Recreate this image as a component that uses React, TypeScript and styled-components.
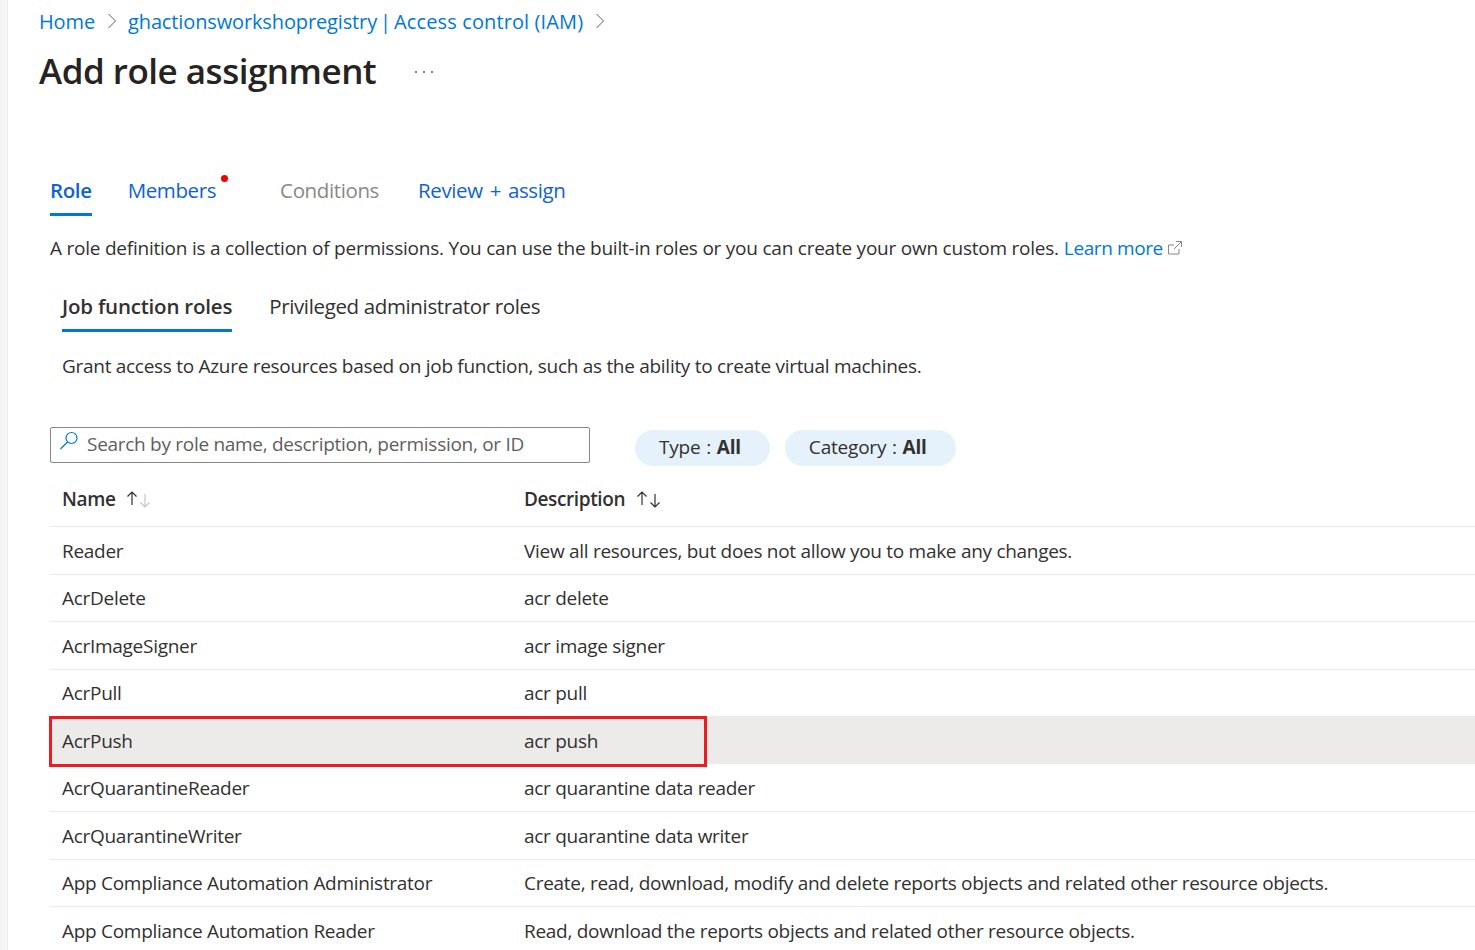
import styled, { createGlobalStyle } from "styled-components";

const GlobalStyle = createGlobalStyle`
  html, body {
    margin: 0;
    padding: 0;
    background: #fff;
    overflow: hidden;
  }
  body {
    font-family: "Open Sans", "Noto Sans", sans-serif;
    color: #323130;
  }
`;

const Page = styled.div`
  display: flex;
  height: 950px;
  overflow: hidden;
  font-size: 19px;
  letter-spacing: -0.29px;
`;

const SideStrip = styled.div`
  width: 7px;
  flex: none;
  background: #f5f5f5;
  border-right: 1px solid #ececec;
`;

const Main = styled.main`
  flex: 1;
  min-width: 0;
`;

const Breadcrumbs = styled.nav`
  display: flex;
  align-items: center;
  height: 22px;
  margin: 10px 0 0 31px;
  gap: 10.500px;
  color: #0078d4;
  font-size: 20px;
  letter-spacing: -0.13px;
`;

const CrumbDivider = styled.span`
  margin: 0 -2px;
`;

const CrumbTail = styled.span`
  letter-spacing: 0.12px;
`;

const Chevron = styled.svg`
  width: 12px;
  height: 18px;
  stroke: #605e5c;
  fill: none;
  stroke-width: 1;
`;

const TitleRow = styled.div`
  display: flex;
  align-items: center;
  margin: 15px 0 0 31px;
  height: 46px;
`;

const Title = styled.h1`
  margin: 0;
  font-size: 35px;
  font-weight: 600;
  letter-spacing: -0.5px;
  color: #252423;
`;

const More = styled.span`
  margin: 3px 0 0 39px;
  width: 18px;
  display: flex;
  justify-content: space-between;
  i {
    width: 2px;
    height: 2px;
    border-radius: 50%;
    background: #605e5c;
  }
`;

const Content = styled.div`
  margin: 79px 0 0 42px;
`;

const WizardTabs = styled.div`
  display: flex;
  height: 44px;
  font-size: 20.500px;
  letter-spacing: -0.38px;
  word-spacing: 2px;
`;

const WizardTab = styled.div<{ $active?: boolean; $muted?: boolean; $gap: number }>`
  position: relative;
  margin-right: ${(p) => p.$gap}px;
  height: 41px;
  line-height: 36px;
  color: ${(p) => (p.$muted ? "#8a8886" : "#0f62d6")};
  font-weight: ${(p) => (p.$active ? 600 : 400)};
  border-bottom: ${(p) => (p.$active ? "3px solid #0078d4" : "3px solid transparent")};
`;

const RedDot = styled.span`
  position: absolute;
  right: -12px;
  top: 3px;
  width: 7px;
  height: 7px;
  border-radius: 50%;
  background: #f00000;
`;

const Intro = styled.p`
  margin: 19px 0 0;
  height: 26px;
  line-height: 26px;
  white-space: nowrap;
  display: flex;
  align-items: center;
  letter-spacing: -0.23px;
`;

const LearnMore = styled.span`
  color: #0078d4;
  margin-left: 5px;
  letter-spacing: -0.4px;
`;

const External = styled.svg`
  width: 16px;
  height: 16px;
  margin-left: 4px;
  fill: none;
  stroke: #8a8886;
  stroke-width: 1;
`;

const RoleTabs = styled.div`
  display: flex;
  margin: 31px 0 0 12px;
  gap: 37px;
  font-size: 20.500px;
  letter-spacing: -0.32px;
`;

const RoleTab = styled.div<{ $active?: boolean }>`
  height: 37px;
  line-height: 28px;
  font-weight: ${(p) => (p.$active ? 600 : 400)};
  letter-spacing: ${(p) => (p.$active ? "-0.21px" : "-0.36px")};
  border-bottom: 3px solid ${(p) => (p.$active ? "#0078d4" : "transparent")};
`;

const RoleHint = styled.p`
  margin: 21px 0 0 12px;
  height: 26px;
  line-height: 26px;
`;

const FilterBar = styled.div`
  display: flex;
  align-items: flex-start;
  margin-top: 48px;
`;

const SearchBox = styled.div`
  box-sizing: border-box;
  width: 540px;
  height: 36px;
  display: flex;
  align-items: center;
  padding: 0 0 2px 8px;
  gap: 8px;
  border: 1px solid #8a8886;
  border-radius: 2px;
  color: #605e5c;
`;

const SearchIcon = styled.svg`
  width: 20px;
  height: 20px;
  margin-top: -6px;
  fill: none;
  stroke: #0078d4;
  stroke-width: 1.2;
`;

const Pill = styled.div<{ $left: number }>`
  margin: 3px 0 0 ${(p) => p.$left}px;
  height: 36px;
  line-height: 34px;
  padding: 0 29px 0 24px;
  border-radius: 18px;
  background: #e6f2fb;
  letter-spacing: -0.2px;
  word-spacing: 1px;
  b {
    font-weight: 700;
  }
`;

const RoleTable = styled.div`
  margin-top: 6px;
  position: relative;
`;

const HeaderRow = styled.div`
  display: grid;
  grid-template-columns: 462px 1fr;
  height: 54px;
  align-items: center;
  padding-left: 12px;
  border-bottom: 1px solid #edebe9;
  font-weight: 600;
  letter-spacing: -0.38px;
`;

const HeaderCell = styled.div`
  display: flex;
  align-items: center;
  gap: 11px;
  height: 100%;
`;

const SortIcon = styled.svg`
  width: 26px;
  height: 20px;
  fill: none;
  stroke-width: 1.2;
`;

const Row = styled.div<{ $selected?: boolean }>`
  display: grid;
  grid-template-columns: 462px 1fr;
  height: 47.500px;
  box-sizing: border-box;
  align-items: center;
  padding: 1px 0 0 12px;
  white-space: nowrap;
  background: ${(p) => (p.$selected ? "#edebe9" : "#fff")};
  background-clip: padding-box;
  border-bottom: 1px solid ${(p) => (p.$selected ? "#fff" : "#edebe9")};
`;

const Highlight = styled.div`
  position: absolute;
  left: -1px;
  top: 244px;
  width: 658px;
  height: 51px;
  box-sizing: border-box;
  border: 3px solid #ed1c24;
  pointer-events: none;
`;

const roles = [
  ["Reader", "View all resources, but does not allow you to make any changes."],
  ["AcrDelete", "acr delete"],
  ["AcrImageSigner", "acr image signer"],
  ["AcrPull", "acr pull"],
  ["AcrPush", "acr push"],
  ["AcrQuarantineReader", "acr quarantine data reader"],
  ["AcrQuarantineWriter", "acr quarantine data writer"],
  ["App Compliance Automation Administrator", "Create, read, download, modify and delete reports objects and related other resource objects."],
  ["App Compliance Automation Reader", "Read, download the reports objects and related other resource objects."],
];

const Sort = ({ downColor }: { downColor: string }) => (
  <SortIcon viewBox="0 0 26 20">
    <path d="M6 16V3M1.500 7.500 6 3l4.500 4.500" stroke="#323130" />
    <path d="M19 5v13M14.500 13.500 19 18l4.500-4.500" stroke={downColor} />
  </SortIcon>
);

const Caret = () => (
  <Chevron viewBox="0 0 12 18">
    <path d="M2.500 2l7 7-7 7" />
  </Chevron>
);

export default function App() {
  return (
    <Page>
      <GlobalStyle />
      <SideStrip />
      <Main>
        <Breadcrumbs>
          <span>Home</span>
          <Caret />
          <span>
            ghactionsworkshopregistry <CrumbDivider>|</CrumbDivider> <CrumbTail>Access control (IAM)</CrumbTail>
          </span>
          <Caret />
        </Breadcrumbs>
        <TitleRow>
          <Title>Add role assignment</Title>
          <More>
            <i />
            <i />
            <i />
          </More>
        </TitleRow>
        <Content>
          <WizardTabs>
            <WizardTab $active $gap={36}>Role</WizardTab>
            <WizardTab $gap={64}>
              Members
              <RedDot />
            </WizardTab>
            <WizardTab $muted $gap={39}>Conditions</WizardTab>
            <WizardTab $gap={0}>Review + assign</WizardTab>
          </WizardTabs>
          <Intro>
            A role definition is a collection of permissions. You can use the built-in roles or you can create your own custom roles.
            <LearnMore>Learn more</LearnMore>
            <External viewBox="0 0 16 16">
              <path d="M12 9v5H1.500V5H7M9 1.500h5.500V7M14.500 1.500 7 9" />
            </External>
          </Intro>
          <RoleTabs>
            <RoleTab $active>Job function roles</RoleTab>
            <RoleTab>Privileged administrator roles</RoleTab>
          </RoleTabs>
          <RoleHint>Grant access to Azure resources based on job function, such as the ability to create virtual machines.</RoleHint>
          <FilterBar>
            <SearchBox>
              <SearchIcon viewBox="0 0 20 20">
                <circle cx="12.500" cy="7" r="5.500" />
                <path d="M8.500 11 1.500 18" />
              </SearchIcon>
              Search by role name, description, permission, or ID
            </SearchBox>
            <Pill $left={45}>Type : <b>All</b></Pill>
            <Pill $left={15}>Category : <b>All</b></Pill>
          </FilterBar>
          <RoleTable>
            <HeaderRow>
              <HeaderCell>Name <Sort downColor="#c8c6c4" /></HeaderCell>
              <HeaderCell>Description <Sort downColor="#323130" /></HeaderCell>
            </HeaderRow>
            {roles.map(([name, description]) => (
              <Row key={name} $selected={name === "AcrPush"}>
                <div>{name}</div>
                <div>{description}</div>
              </Row>
            ))}
            <Highlight />
          </RoleTable>
        </Content>
      </Main>
    </Page>
  );
}
